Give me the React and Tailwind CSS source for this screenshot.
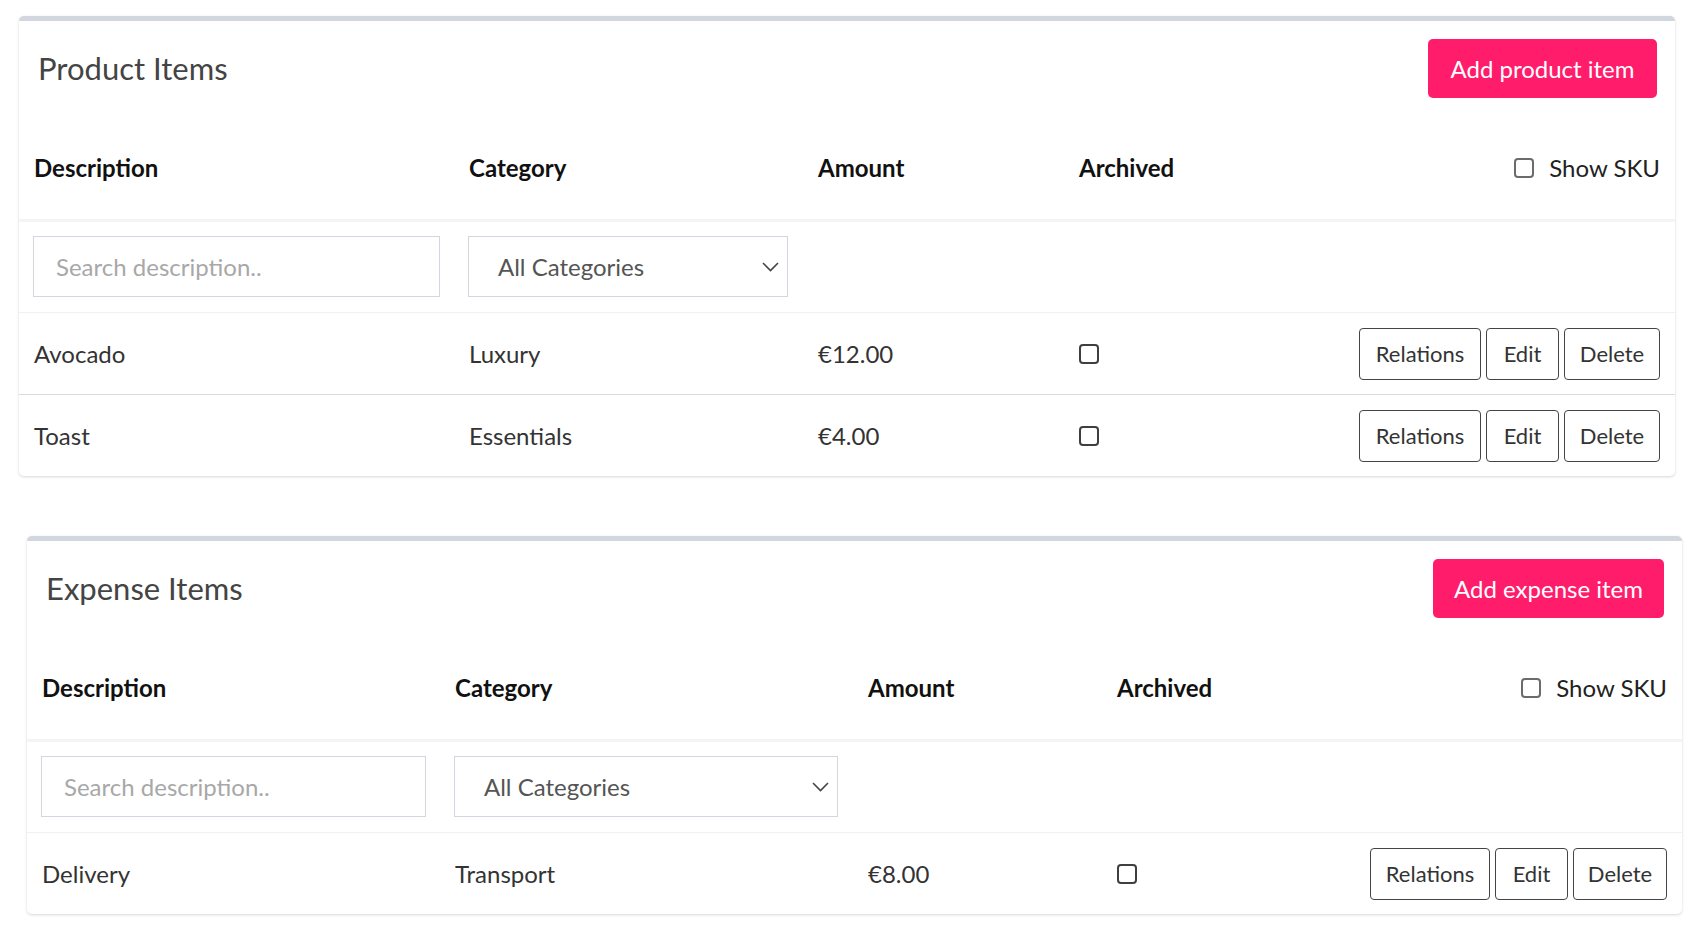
import React, { useState } from 'react';

const productItems = [
    { id: 1, description: 'Avocado', category: 'Luxury', amount: '€12.00', archived: false },
    { id: 2, description: 'Toast', category: 'Essentials', amount: '€4.00', archived: false },
];

const expenseItems = [
    { id: 3, description: 'Delivery', category: 'Transport', amount: '€8.00', archived: false },
];

function Checkbox({ checked, onChange, tone = 'dark' }) {
    return (
        <input
            type="checkbox"
            checked={checked}
            onChange={onChange}
            className={`appearance-none w-[20px] h-[20px] rounded-[4px] border-2 bg-white ${tone === 'dark' ? 'border-[#3f3f3f]' : 'border-[#6b6b6b]'}`}
        />
    );
}

function Chevron() {
    return (
        <svg width="17" height="10" viewBox="0 0 17 10" fill="none" className="shrink-0">
            <path d="M1 1l7.5 7.5L16 1" stroke="#444" strokeWidth="1.6" />
        </svg>
    );
}

function ItemsCard({ title, addLabel, items, cols, cardClass, searchWidth, selectWidth, buttonWidth, relationsWidth, editWidth, deleteWidth }) {
    const [showSku, setShowSku] = useState(false);
    const [search, setSearch] = useState('');

    return (
        <div className={`${cardClass} bg-white rounded-[5px] border-t-[5px] border-[#d2d6de] shadow-[0_1px_3px_rgba(0,0,0,0.16)]`}>
            <div className="flex items-start justify-between pl-[19px] pr-[18px] pt-[18px]">
                <h3 className="h-[59px] flex items-center text-[31px] text-[#444] font-normal">{title}</h3>
                <button className={`${buttonWidth} h-[59px] rounded-[5px] bg-[#ff1c6b] text-white text-[24px]`}>{addLabel}</button>
            </div>

            <div className={`grid ${cols} pl-[15px] pr-[15px] pt-[52px] pb-[33px] border-b-[3px] border-[#f4f4f4] text-[24px] leading-[36px] font-bold text-[#111]`}>
                <div>Description</div>
                <div>Category</div>
                <div>Amount</div>
                <div className="flex items-center justify-between">
                    <span>Archived</span>
                    <label className="flex items-center gap-[15px] font-normal text-[#222]">
                        <Checkbox checked={showSku} onChange={() => setShowSku(!showSku)} tone="light" />
                        Show SKU
                    </label>
                </div>
            </div>

            <div className={`grid ${cols} pl-[14px] pt-[14px] pb-[15px]`}>
                <div>
                    <input
                        value={search}
                        onChange={(e) => setSearch(e.target.value)}
                        placeholder="Search description.."
                        className={`${searchWidth} h-[61px] border border-[#d2d6de] px-[22px] text-[24px] text-[#555] placeholder:text-[#a8a8a8] outline-none`}
                    />
                </div>
                <div>
                    <div className={`${selectWidth} h-[61px] border border-[#d2d6de] pl-[29px] pr-[8px] flex items-center justify-between text-[24px] text-[#555]`}>
                        <span>All Categories</span>
                        <Chevron />
                    </div>
                </div>
            </div>

            {items.map((item, i) => (
                <div key={item.id} className={`grid ${cols} items-center h-[82px] pl-[15px] pr-[15px] border-t ${i === 0 ? 'border-[#f1f1f1]' : 'border-[#dadada]'} text-[24px] text-[#333]`}>
                    <div>{item.description}</div>
                    <div>{item.category}</div>
                    <div>{item.amount}</div>
                    <div className="flex items-center justify-between">
                        <Checkbox checked={item.archived} onChange={() => {}} />
                        <div className="flex gap-[5px] text-[22px] text-[#333]">
                            <button className={`${relationsWidth} h-[52px] rounded-[4px] border border-[#444] bg-white`}>Relations</button>
                            <button className={`${editWidth} h-[52px] rounded-[4px] border border-[#444] bg-white`}>Edit</button>
                            <button className={`${deleteWidth} h-[52px] rounded-[4px] border border-[#444] bg-white`}>Delete</button>
                        </div>
                    </div>
                </div>
            ))}
        </div>
    );
}

export default function App() {
    return (
        <div className="min-h-screen bg-white pt-[16px] pb-[20px] font-['Lato','Open_Sans',sans-serif]">
            <ItemsCard
                title="Product Items"
                addLabel="Add product item"
                items={productItems}
                cols="grid-cols-[435px_349px_261px_1fr]"
                cardClass="ml-[19px] w-[1656px]"
                searchWidth="w-[407px]"
                selectWidth="w-[320px]"
                buttonWidth="w-[229px]"
                relationsWidth="w-[122px]"
                editWidth="w-[73px]"
                deleteWidth="w-[96px]"
            />
            <ItemsCard
                title="Expense Items"
                addLabel="Add expense item"
                items={expenseItems}
                cols="grid-cols-[413px_413px_249px_1fr]"
                cardClass="ml-[27px] mt-[60px] w-[1655px]"
                searchWidth="w-[385px]"
                selectWidth="w-[384px]"
                buttonWidth="w-[231px]"
                relationsWidth="w-[120px]"
                editWidth="w-[73px]"
                deleteWidth="w-[94px]"
            />
        </div>
    );
}
